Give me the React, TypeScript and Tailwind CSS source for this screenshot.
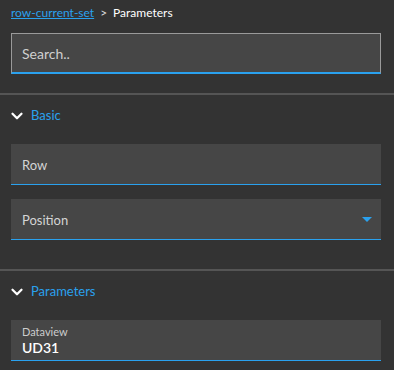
import { ChevronDown } from "lucide-react";

function SectionHeader({ label }: { label: string }) {
  return (
    <div className="flex h-[40px] items-center gap-[5px] pl-[8px]">
      <ChevronDown className="size-[18px] text-white" strokeWidth={3} aria-hidden />
      <span className="text-[13px] text-[#2aa1ee]">{label}</span>
    </div>
  );
}

function Field({ label, select }: { label: string; select?: boolean }) {
  return (
    <div className="flex h-[41px] items-center justify-between border-b border-[#2aa1ee] bg-[#464646] pl-[11px] pr-[9px] pt-[4px]">
      <span className="text-[13px] text-[#d4d4d4]">{label}</span>
      {select && (
        <span className="-mt-[4px] h-0 w-0 border-x-[5px] border-t-[5px] border-x-transparent border-t-[#2aa1ee]" />
      )}
    </div>
  );
}

export default function App() {
  return (
    <div
      className="h-[370px] w-[394px] overflow-hidden bg-[#333333]"
      style={{ fontFamily: 'Lato, "Noto Sans", sans-serif' }}
    >
      {/* breadcrumb + search */}
      <div className="pl-[11px] pr-[13px]">
        <div className="flex h-[25px] items-center gap-[6px] text-[12px]">
          <span className="text-[#2aa1ee] underline">row-current-set</span>
          <span className="text-[#dcdcdc]">&gt;</span>
          <span className="text-white">Parameters</span>
        </div>
        <div className="mt-[8px] flex h-[41px] items-center border border-b-2 border-[#9a9a9a] border-b-[#2aa1ee] bg-[#464646] px-[10px]">
          <span className="text-[14px] text-[#cfcfcf]">Search..</span>
        </div>
      </div>

      <div className="mt-[19px] h-[2px] bg-[#555555]" />

      <div className="mt-[1px]">
        <SectionHeader label="Basic" />
        <div className="mt-[8px] flex flex-col gap-[14px] pl-[11px] pr-[13px]">
          <Field label="Row" />
          <Field label="Position" select />
        </div>
      </div>

      <div className="mt-[29px] h-[2px] bg-[#555555]" />

      <div className="mt-[1px]">
        <SectionHeader label="Parameters" />
        <div className="mt-[8px] pl-[11px] pr-[13px]">
          <div className="flex h-[41px] flex-col border-b border-[#2aa1ee] bg-[#464646] pl-[11px] pt-[4px]">
            <span className="text-[11px] leading-[15px] text-[#cccccc]">Dataview</span>
            <span className="text-[14px] font-semibold leading-[18px] text-white">UD31</span>
          </div>
        </div>
      </div>
    </div>
  );
}
